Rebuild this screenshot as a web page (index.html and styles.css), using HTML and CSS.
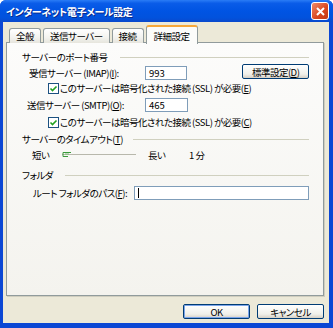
FILE: index.html
```html
<!DOCTYPE html>
<html lang="ja">
  <head>
    <meta charset="UTF-8" />
    <title>インターネット電子メール設定</title>
    <link rel="stylesheet" href="styles.css">
  </head>
  <body>
    <div class="window">
      <!-- Title bar -->
      <div class="titlebar">
        <span class="title">インターネット電子メール設定</span>
        <span class="close">
          <svg width="11" height="11" viewBox="0 0 11 11">
            <path d="M2 2 L9 9 M9 2 L2 9" stroke="#fff" stroke-width="2" />
          </svg>
        </span>
      </div>

      <div class="client">
        <!-- Tabs -->
        <div class="tabs">
          <div class="tab">全般</div>
          <div class="tab">送信サーバー</div>
          <div class="tab">接続</div>
          <div class="tab active">詳細設定</div>
        </div>

        <!-- Tab panel -->
        <div class="panel">
          <div class="section">
            <span>サーバーのポート番号</span>
            <span class="rule"></span>
          </div>

          <div class="row row-imap">
            <span class="label">受信サーバー (IMAP)(<u>I</u>):</span>
            <span class="input small">993</span>
            <span class="button defaults">標準設定(<u>D</u>)</span>
          </div>
          <div class="row check">
            <span class="box">
              <svg width="11" height="11" viewBox="0 0 11 11">
                <rect x="0.5" y="0.5" width="10" height="10" fill="#fff" stroke="#1c5180" />
                <path d="M2.5 5.5 L4.5 7.5 L8.5 3.5" fill="none" stroke="#21a121" stroke-width="1.6" />
              </svg>
            </span>
            <span>このサーバーは暗号化された接続 (SSL) が必要(<u>E</u>)</span>
          </div>

          <div class="row row-smtp">
            <span class="label">送信サーバー (SMTP)(<u>O</u>):</span>
            <span class="input small">465</span>
          </div>
          <div class="row check">
            <span class="box">
              <svg width="11" height="11" viewBox="0 0 11 11">
                <rect x="0.5" y="0.5" width="10" height="10" fill="#fff" stroke="#1c5180" />
                <path d="M2.5 5.5 L4.5 7.5 L8.5 3.5" fill="none" stroke="#21a121" stroke-width="1.6" />
              </svg>
            </span>
            <span>このサーバーは暗号化された接続 (SSL) が必要(<u>C</u>)</span>
          </div>

          <div class="section section-timeout">
            <span>サーバーのタイムアウト(<u>T</u>)</span>
            <span class="rule"></span>
          </div>
          <div class="row slider-row">
            <span class="short">短い</span>
            <span class="slider">
              <svg width="74" height="8" viewBox="0 0 74 8">
                <line x1="0" y1="3.5" x2="74" y2="3.5" stroke="#b8b8ac" />
                <path d="M1 1.5 H9 M1 1.5 V5.5 M1 5.5 H6" fill="none" stroke="#3c9a3c" />
                <path d="M3 3 H7" stroke="#7bc27b" />
              </svg>
            </span>
            <span class="long">長い</span>
            <span class="minutes">1 分</span>
          </div>

          <div class="section section-folder">
            <span>フォルダ</span>
            <span class="rule"></span>
          </div>
          <div class="row folder-row">
            <span class="label">ルート フォルダのパス(<u>F</u>):</span>
            <span class="input wide"><span class="caret"></span></span>
          </div>
        </div>

        <!-- Dialog buttons -->
        <div class="actions">
          <span class="button ok">OK</span>
          <span class="button">キャンセル</span>
        </div>
      </div>
    </div>
  </body>
</html>
```

FILE: styles.css
```css
/* General styles */
body {
  margin: 0;
  font-family: "Noto Sans CJK JP", "Noto Sans", sans-serif;
  font-size: 9.5px;
  letter-spacing: -0.5px;
  font-feature-settings: "palt" 1;
  color: #000;
  white-space: nowrap;
}

u {
  text-decoration: underline;
  text-underline-offset: 1px;
}

/* Window frame */
.window {
  width: 333px;
  height: 328px;
  display: flex;
  flex-direction: column;
  background: #0b47d4;
  border-radius: 6px 6px 0 0;
  overflow: hidden;
}

.titlebar {
  height: 22px;
  flex: none;
  display: flex;
  align-items: center;
  padding: 0 4px 0 6px;
  background: linear-gradient(#2a7cf6 0%, #0a5ce8 15%, #0054e3 50%, #0152dd 80%, #0a49cc 100%);
}

.title {
  flex: 1;
  color: #fff;
  font-weight: bold;
  font-size: 10px;
  letter-spacing: -0.4px;
  text-shadow: 1px 1px 0 #0a2a8a;
}

.close {
  width: 16px;
  height: 16px;
  display: flex;
  align-items: center;
  justify-content: center;
  border: 1px solid #fff;
  border-radius: 3px;
  background: linear-gradient(135deg, #f08a6a, #d8461d 60%, #c23a14);
}

/* Dialog client area */
.client {
  flex: 1;
  margin: 0 4px 5px 3px;
  background: #ece9d8;
  display: flex;
  flex-direction: column;
  padding: 5px 5px 0 3px;
}

/* Tabs */
.tabs {
  display: flex;
  align-items: flex-end;
  gap: 2px;
  padding-left: 3px;
  height: 16px;
  margin-bottom: -1px;
  position: relative;
  z-index: 1;
}

.tab {
  height: 14px;
  padding: 0 6px;
  display: flex;
  align-items: center;
  border: 1px solid #919b9c;
  border-bottom: none;
  border-radius: 3px 3px 0 0;
  background: linear-gradient(#ffffff, #f3f3ef 60%, #e6e5dd);
}

.tab.active {
  height: 17px;
  margin-bottom: -1px;
  padding: 0 7px;
  border-top: 2px solid #f7a83a;
  background: #fcfcfa;
}

/* Tab panel */
.panel {
  height: 254px;
  border: 1px solid #919b9c;
  background: linear-gradient(#fcfcfb, #f4f3ee);
  padding: 7px 14px 0 15px;
  box-sizing: border-box;
  box-shadow: 1px 1px 0 #d0cebf;
}

.section {
  height: 14px;
  display: flex;
  align-items: center;
}

.section .rule {
  flex: 1;
  height: 0;
  margin-left: 12px;
  border-top: 1px solid #d0d0bf;
}

.section-timeout {
  margin-top: 3px;
}

.section-timeout .rule {
  margin-left: 10px;
}

.section-folder {
  margin-top: 6px;
}

.section-folder .rule {
  margin-left: 12px;
}

.row {
  display: flex;
  align-items: center;
}

.label {
  width: 123px;
  padding-left: 7px;
  box-sizing: border-box;
  flex: none;
}

.row-imap {
  height: 17px;
}

.row-smtp {
  height: 17px;
  margin-top: 1px;
}

.row-smtp .label {
  padding-left: 5px;
}

.check {
  height: 14px;
  padding-left: 26px;
  gap: 1px;
}

.row-smtp + .check {
  margin-top: 2px;
}

.box {
  display: flex;
}

/* Inputs */
.input {
  height: 14px;
  box-sizing: border-box;
  border: 1px solid #7f9db9;
  background: #fff;
  padding-left: 3px;
  display: flex;
  align-items: center;
  letter-spacing: 0;
}

.input.small {
  width: 43px;
}

.input.wide {
  width: 180px;
}

.caret {
  width: 1px;
  height: 10px;
  background: #000;
}

/* Buttons */
.button {
  height: 15px;
  box-sizing: border-box;
  border: 1px solid #003c74;
  border-radius: 2px;
  background: linear-gradient(#ffffff, #f0f0ea 70%, #d6d0c5);
  display: flex;
  align-items: center;
  justify-content: center;
}

.defaults {
  width: 68px;
  margin-left: 55px;
  margin-top: -2px;
}

.actions {
  display: flex;
  justify-content: flex-end;
  gap: 7px;
  margin-top: 8px;
}

.actions .button {
  width: 67px;
}

.actions .ok {
  box-shadow: inset 0 0 0 1px #7ba4e9;
}

/* Timeout slider */
.slider-row {
  height: 15px;
  margin-top: 1px;
  padding-left: 10px;
}

.short {
  width: 30px;
}

.slider {
  width: 74px;
  display: flex;
}

.long {
  margin-left: 12px;
  width: 41px;
}

.folder-row {
  height: 16px;
  margin-top: 3px;
}

.folder-row .label {
  width: 112px;
  padding-left: 11px;
}
```
